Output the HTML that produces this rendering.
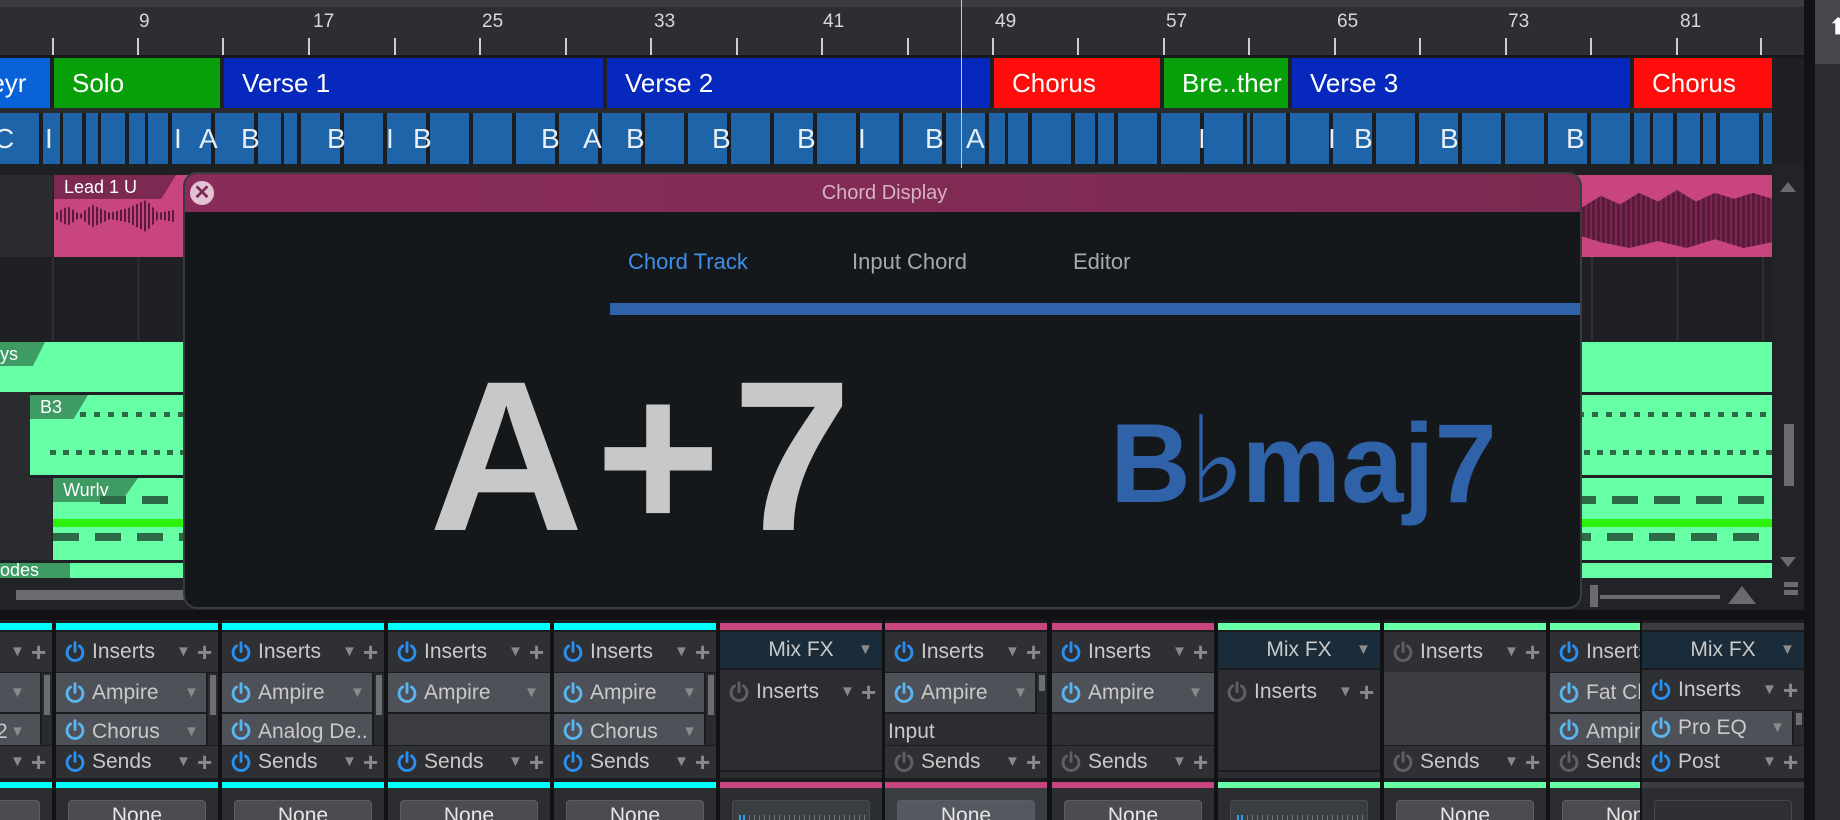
<!DOCTYPE html>
<html><head><meta charset="utf-8"><style>
*{margin:0;padding:0;box-sizing:border-box}
body{width:1840px;height:820px;background:#1a1b1e;position:relative;overflow:hidden;font-family:"Liberation Sans",sans-serif}
.a{position:absolute}
.blk{position:absolute;top:58px;height:50px;color:#fff;font-size:26px;line-height:50px;padding-left:18px;white-space:nowrap;overflow:hidden}
.num{position:absolute;top:11px;font-size:19px;color:#d8d8d8}
.tick{position:absolute;top:38px;width:2px;height:17px;background:#cfcfcf}
.cl{position:absolute;top:113px;font-size:28px;color:#e8eef5;line-height:51px}
.strip{position:absolute;top:620px;width:162px;height:200px;background:#1b1c1f;overflow:hidden}
.strip .r{position:absolute;left:0;width:162px;color:#c9c9c9;font-size:21px;white-space:nowrap;overflow:hidden}
.hd{top:12px;height:40px;background:#2e3034;line-height:40px}
.s1{top:53px;height:39px;background:#4e5158;line-height:39px;width:150px!important}
.s2{top:94px;height:31px;background:#4e5158;line-height:36px;width:150px!important}
.se{top:126px;height:32px;background:#2e3034;line-height:32px}
.r .p{position:absolute;left:9px;top:50%;margin-top:-11px}
.r .t{position:absolute;left:36px}
.r .v{position:absolute;left:120px;color:#8a8a8a;font-size:15px}
.r .pl{position:absolute;left:141px;color:#8a8a8a;font-size:26px;font-weight:bold}
.bar{position:absolute;left:0;width:162px;height:7px;top:3px}
.bar2{position:absolute;left:0;width:162px;height:6px;top:162px}
.bot{position:absolute;left:0;width:162px;top:168px;height:32px;background:#2b2d31}
.btn{position:absolute;left:12px;top:12px;width:138px;height:30px;background:#4a4c50;border:1px solid #5c5e62;border-radius:4px;color:#e6e6e6;font-size:21px;text-align:center;line-height:30px}
.sb{position:absolute;left:152px;top:53px;width:10px;height:72px;background:#2a2b2e}
.sb i{position:absolute;left:2px;top:2px;width:6px;height:40px;background:#6c6e72}
.mfx{top:12px;height:36px;background:#1a2c3a;text-align:center;line-height:36px;color:#ccc}
.meter{position:absolute;left:12px;top:12px;width:138px;height:30px;background:#3a3d42;border-radius:3px;border:1px solid #4a4c50}
.meter i{position:absolute;left:6px;top:14px;width:126px;height:12px;background:repeating-linear-gradient(90deg,#70757c 0 1px,transparent 1px 5px)}
.meter b{position:absolute;left:6px;top:14px;width:8px;height:12px;background:repeating-linear-gradient(90deg,#2a9ff0 0 2px,transparent 2px 4px)}
.tab{position:absolute;height:24px;line-height:24px;font-size:18px;color:#fff;padding-left:10px}
</style></head><body>
<svg width="0" height="0" style="position:absolute"><defs>
<symbol id="pw" viewBox="0 0 18 20"><path d="M5 4.5 A7.2 7.2 0 1 0 13 4.5" fill="none" stroke="currentColor" stroke-width="2.6" stroke-linecap="round"/><line x1="9" y1="1.5" x2="9" y2="9.5" stroke="currentColor" stroke-width="2.6" stroke-linecap="round"/></symbol>
</defs></svg>

<div class="a" style="left:0;top:0;width:1804px;height:55px;background:#2c2e32"></div>
<div class="a" style="left:0;top:0;width:1804px;height:7px;background:#3a3c40"></div>
<div class="a" style="left:0;top:55px;width:1804px;height:3px;background:#18191b"></div>
<div class="tick" style="left:52px"></div><div class="tick" style="left:137px"></div><div class="tick" style="left:222px"></div><div class="tick" style="left:308px"></div><div class="tick" style="left:394px"></div><div class="tick" style="left:479px"></div><div class="tick" style="left:565px"></div><div class="tick" style="left:650px"></div><div class="tick" style="left:736px"></div><div class="tick" style="left:821px"></div><div class="tick" style="left:907px"></div><div class="tick" style="left:992px"></div><div class="tick" style="left:1077px"></div><div class="tick" style="left:1163px"></div><div class="tick" style="left:1248px"></div><div class="tick" style="left:1334px"></div><div class="tick" style="left:1419px"></div><div class="tick" style="left:1505px"></div><div class="tick" style="left:1590px"></div><div class="tick" style="left:1676px"></div><div class="tick" style="left:1760px"></div>
<div class="num" style="left:139px">9</div><div class="num" style="left:313px">17</div><div class="num" style="left:482px">25</div><div class="num" style="left:654px">33</div><div class="num" style="left:823px">41</div><div class="num" style="left:995px">49</div><div class="num" style="left:1166px">57</div><div class="num" style="left:1337px">65</div><div class="num" style="left:1508px">73</div><div class="num" style="left:1680px">81</div>
<div class="a" style="left:961px;top:0;width:1px;height:168px;background:#c8c8c8;z-index:5"></div>

<div class="a" style="left:1804px;top:0;width:11px;height:820px;background:#111214"></div>
<div class="a" style="left:1815px;top:0;width:25px;height:820px;background:#2b2d31"></div>
<div class="a" style="left:1815px;top:0;width:25px;height:64px;background:#45474b"></div>
<div class="a" style="left:1829px;top:14px;color:#fff;font-size:22px;font-weight:bold">⬆</div>

<div class="a" style="left:0;top:58px;width:1804px;height:117px;background:#1f2023"></div>
<div class="blk" style="left:-45px;width:95px;background:#0a62d8">Keyr</div>
<div class="blk" style="left:54px;width:166px;background:#08a00a;padding-left:18px">Solo</div>
<div class="blk" style="left:224px;width:379px;background:#0628bc">Verse 1</div>
<div class="blk" style="left:607px;width:383px;background:#0628bc">Verse 2</div>
<div class="blk" style="left:994px;width:166px;background:#ff0d0d">Chorus</div>
<div class="blk" style="left:1164px;width:124px;background:#08a00a;padding-left:18px">Bre..ther</div>
<div class="blk" style="left:1292px;width:338px;background:#0628bc">Verse 3</div>
<div class="blk" style="left:1634px;width:138px;background:#ff0d0d">Chorus</div>
<div class="a" style="left:0;top:108px;width:1772px;height:5px;background:#2a2b2f"></div>
<div class="a" style="left:0;top:113px;width:1772px;height:51px;background:repeating-linear-gradient(90deg,#1e64a8 0 39px,#1a1c20 39px 43px)"></div>
<div class="a" style="left:60px;top:113px;width:3px;height:51px;background:#1a1c20"></div><div class="a" style="left:98px;top:113px;width:3px;height:51px;background:#1a1c20"></div><div class="a" style="left:145px;top:113px;width:3px;height:51px;background:#1a1c20"></div><div class="a" style="left:281px;top:113px;width:3px;height:51px;background:#1a1c20"></div><div class="a" style="left:1005px;top:113px;width:3px;height:51px;background:#1a1c20"></div><div class="a" style="left:1095px;top:113px;width:3px;height:51px;background:#1a1c20"></div><div class="a" style="left:1250px;top:113px;width:3px;height:51px;background:#1a1c20"></div><div class="a" style="left:1650px;top:113px;width:3px;height:51px;background:#1a1c20"></div><div class="a" style="left:1700px;top:113px;width:3px;height:51px;background:#1a1c20"></div>
<div class="cl" style="left:-6px">C</div><div class="cl" style="left:45px">I</div><div class="cl" style="left:174px">I</div><div class="cl" style="left:199px">A</div><div class="cl" style="left:241px">B</div><div class="cl" style="left:327px">B</div><div class="cl" style="left:386px">I</div><div class="cl" style="left:413px">B</div><div class="cl" style="left:541px">B</div><div class="cl" style="left:583px">A</div><div class="cl" style="left:626px">B</div><div class="cl" style="left:712px">B</div><div class="cl" style="left:797px">B</div><div class="cl" style="left:858px">I</div><div class="cl" style="left:925px">B</div><div class="cl" style="left:966px">A</div><div class="cl" style="left:1198px">I</div><div class="cl" style="left:1328px">I</div><div class="cl" style="left:1354px">B</div><div class="cl" style="left:1440px">B</div><div class="cl" style="left:1566px">B</div>
<div class="a" style="left:0;top:164px;width:1772px;height:11px;background:#1f2023"></div>

<div class="a" style="left:0;top:175px;width:1772px;height:402px;background:#1f2023"></div>
<div class="a" style="left:0;top:175px;width:53px;height:82px;background:#2a2b2f"></div>
<div class="a" style="left:0;top:257px;width:1772px;height:84px;background:repeating-linear-gradient(90deg,#2e2f33 0 2px,transparent 2px 85.5px);background-position:52px 0"></div>
<div class="a" style="left:54px;top:175px;width:1718px;height:82px;background:#c9457f"></div>
<div class="tab" style="left:54px;top:175px;width:122px;background:#7d2a52;clip-path:polygon(0 0,100% 0,88% 100%,0 100%)">Lead 1 U</div>
<div class="a" style="left:56px;top:200px;width:120px;height:32px;background:repeating-linear-gradient(90deg,#5a1a3a 0 2px,transparent 2px 4px);clip-path:polygon(0 40%,10% 20%,20% 45%,30% 15%,45% 40%,60% 25%,75% 0,85% 40%,100% 30%,100% 70%,85% 60%,75% 100%,60% 70%,45% 60%,30% 85%,20% 55%,10% 80%,0 60%)"></div>
<div class="a" style="left:1582px;top:190px;width:190px;height:58px;background:repeating-linear-gradient(90deg,#5a1a3a 0 3px,#7a2650 3px 5px);clip-path:polygon(0 30%,10% 10%,20% 25%,30% 5%,40% 20%,50% 0,60% 20%,70% 5%,80% 15%,90% 5%,100% 15%,100% 90%,85% 100%,70% 85%,55% 100%,40% 88%,25% 100%,10% 90%,0 80%)"></div>
<div class="a" style="left:0;top:342px;width:1772px;height:50px;background:#66ffa6"></div>
<div class="tab" style="left:-10px;top:342px;width:55px;background:#3d9b63;clip-path:polygon(0 0,100% 0,78% 100%,0 100%)">ys</div>
<div class="a" style="left:0;top:392px;width:30px;height:86px;background:#2a2b2f"></div>
<div class="a" style="left:30px;top:395px;width:1742px;height:80px;background:#66ffa6"></div>
<div class="tab" style="left:30px;top:395px;width:58px;background:#3d9b63;clip-path:polygon(0 0,100% 0,75% 100%,0 100%)">B3</div>
<div class="a" style="left:80px;top:412px;width:1692px;height:5px;background:repeating-linear-gradient(90deg,#2d6b47 0 6px,transparent 6px 14px)"></div>
<div class="a" style="left:50px;top:450px;width:1722px;height:5px;background:repeating-linear-gradient(90deg,#2d6b47 0 6px,transparent 6px 13px)"></div>
<div class="a" style="left:0;top:478px;width:52px;height:82px;background:#2a2b2f"></div>
<div class="a" style="left:53px;top:478px;width:1719px;height:82px;background:#66ffa6"></div>
<div class="tab" style="left:53px;top:478px;width:85px;background:#3d9b63;clip-path:polygon(0 0,100% 0,80% 100%,0 100%)">Wurly</div>
<div class="a" style="left:53px;top:519px;width:1719px;height:8px;background:#2cf20a"></div>
<div class="a" style="left:100px;top:496px;width:1672px;height:8px;background:repeating-linear-gradient(90deg,#2d6b47 0 26px,transparent 26px 42px)"></div>
<div class="a" style="left:53px;top:533px;width:1719px;height:8px;background:repeating-linear-gradient(90deg,#2d6b47 0 26px,transparent 26px 42px)"></div>
<div class="a" style="left:0;top:563px;width:1772px;height:15px;background:#66ffa6"></div>
<div class="tab" style="left:-10px;top:563px;width:80px;height:15px;line-height:15px;background:#3d9b63;overflow:hidden">odes</div>
<div class="a" style="left:0;top:578px;width:1804px;height:32px;background:#222326"></div>
<div class="a" style="left:16px;top:590px;width:170px;height:10px;background:#6a6b6e"></div>
<div class="a" style="left:1772px;top:164px;width:32px;height:446px;background:#222326"></div>
<div class="a" style="left:1780px;top:182px;width:0;height:0;border-left:8px solid transparent;border-right:8px solid transparent;border-bottom:10px solid #6a6b6e"></div>
<div class="a" style="left:1784px;top:424px;width:10px;height:62px;background:#6a6b6e"></div>
<div class="a" style="left:1780px;top:557px;width:0;height:0;border-left:8px solid transparent;border-right:8px solid transparent;border-top:10px solid #6a6b6e"></div>
<div class="a" style="left:1784px;top:582px;width:14px;height:5px;background:#6a6b6e"></div><div class="a" style="left:1784px;top:590px;width:14px;height:5px;background:#6a6b6e"></div>
<div class="a" style="left:1600px;top:595px;width:120px;height:4px;background:#6a6b6e"></div>
<div class="a" style="left:1590px;top:585px;width:8px;height:22px;background:#6a6b6e"></div>
<div class="a" style="left:1728px;top:586px;width:0;height:0;border-left:14px solid transparent;border-right:14px solid transparent;border-bottom:18px solid #6a6b6e"></div>

<div class="a" style="left:183px;top:172px;width:1399px;height:437px;background:#14181b;border:2px solid #3a3c40;border-radius:14px;overflow:hidden;z-index:10">
 <div class="a" style="left:0;top:0;width:1399px;height:38px;background:linear-gradient(90deg,#8a2c5a,#7a2a50);color:#d5b3c4;font-size:20px;text-align:center;line-height:38px">Chord Display</div>
 <div class="a" style="left:5px;top:7px;width:24px;height:24px;border-radius:50%;background:#e3c3d3;color:#7a2a50;font-size:20px;font-weight:bold;text-align:center;line-height:24px">✕</div>
 <div class="a" style="left:443px;top:75px;color:#3f8fe8;font-size:22px">Chord Track</div>
 <div class="a" style="left:667px;top:75px;color:#a8a8a8;font-size:22px">Input Chord</div>
 <div class="a" style="left:888px;top:75px;color:#a8a8a8;font-size:22px">Editor</div>
 <div class="a" style="left:425px;top:129px;width:980px;height:12px;background:#2f62a8"></div>
 <div class="a" style="left:244px;top:176px;color:#c8c8c8;font-size:214px;font-weight:bold;letter-spacing:12px;line-height:1;white-space:nowrap">A+7</div>
 <div class="a" style="left:925px;top:228px;color:#2f62a8;font-size:112px;font-weight:bold;line-height:1;white-space:nowrap">B<span style="font-family:'DejaVu Sans',sans-serif;font-weight:normal;font-size:120px;margin:0 -4px 0 -2px">♭</span>maj7</div>
</div>

<div class="a" style="left:0;top:610px;width:1804px;height:210px;background:#111214"></div>

<div class="strip" style="left:-110px">
 <div class="bar" style="background:#00ffff"></div>
 <div class="r hd"><span class="v">▼</span><span class="pl">+</span></div>
 <div class="r s1"><span class="v">▼</span></div>
 <div class="r s2"><span class="t" style="left:106px">2</span><span class="v">▼</span></div>
 <div class="sb"><i></i></div>
 <div class="r se"><span class="v">▼</span><span class="pl">+</span></div>
 <div class="bar2" style="background:#00ffff"></div>
 <div class="bot"><div class="btn">None</div></div>
</div>

<div class="strip" style="left:56px">
 <div class="bar" style="background:#00ffff"></div>
 <div class="r hd"><svg class="p" width="20" height="22" style="color:#2b8ff0"><use href="#pw"/></svg><span class="t">Inserts</span><span class="v">▼</span><span class="pl">+</span></div>
 <div class="r s1"><svg class="p" width="20" height="22" style="color:#5ab4f0"><use href="#pw"/></svg><span class="t">Ampire</span><span class="v" style="left:128px">▼</span></div>
 <div class="r s2"><svg class="p" width="20" height="22" style="color:#5ab4f0"><use href="#pw"/></svg><span class="t">Chorus</span><span class="v" style="left:128px">▼</span></div>
 <div class="sb"><i></i></div>
 <div class="r se"><svg class="p" width="20" height="22" style="color:#2b8ff0"><use href="#pw"/></svg><span class="t">Sends</span><span class="v">▼</span><span class="pl">+</span></div>
 <div class="bar2" style="background:#00ffff"></div>
 <div class="bot"><div class="btn">None</div></div>
</div>

<div class="strip" style="left:222px">
 <div class="bar" style="background:#00ffff"></div>
 <div class="r hd"><svg class="p" width="20" height="22" style="color:#2b8ff0"><use href="#pw"/></svg><span class="t">Inserts</span><span class="v">▼</span><span class="pl">+</span></div>
 <div class="r s1"><svg class="p" width="20" height="22" style="color:#5ab4f0"><use href="#pw"/></svg><span class="t">Ampire</span><span class="v" style="left:128px">▼</span></div>
 <div class="r s2"><svg class="p" width="20" height="22" style="color:#5ab4f0"><use href="#pw"/></svg><span class="t">Analog De..</span></div>
 <div class="sb"><i></i></div>
 <div class="r se"><svg class="p" width="20" height="22" style="color:#2b8ff0"><use href="#pw"/></svg><span class="t">Sends</span><span class="v">▼</span><span class="pl">+</span></div>
 <div class="bar2" style="background:#00ffff"></div>
 <div class="bot"><div class="btn">None</div></div>
</div>

<div class="strip" style="left:388px">
 <div class="bar" style="background:#00ffff"></div>
 <div class="r hd"><svg class="p" width="20" height="22" style="color:#2b8ff0"><use href="#pw"/></svg><span class="t">Inserts</span><span class="v">▼</span><span class="pl">+</span></div>
 <div class="r s1" style="width:162px!important"><svg class="p" width="20" height="22" style="color:#5ab4f0"><use href="#pw"/></svg><span class="t">Ampire</span><span class="v" style="left:136px">▼</span></div>
 <div class="r s2" style="background:#3a3c41;width:162px!important"></div>
 <div class="r se"><svg class="p" width="20" height="22" style="color:#2b8ff0"><use href="#pw"/></svg><span class="t">Sends</span><span class="v">▼</span><span class="pl">+</span></div>
 <div class="bar2" style="background:#00ffff"></div>
 <div class="bot"><div class="btn">None</div></div>
</div>

<div class="strip" style="left:554px">
 <div class="bar" style="background:#00ffff"></div>
 <div class="r hd"><svg class="p" width="20" height="22" style="color:#2b8ff0"><use href="#pw"/></svg><span class="t">Inserts</span><span class="v">▼</span><span class="pl">+</span></div>
 <div class="r s1"><svg class="p" width="20" height="22" style="color:#5ab4f0"><use href="#pw"/></svg><span class="t">Ampire</span><span class="v" style="left:128px">▼</span></div>
 <div class="r s2"><svg class="p" width="20" height="22" style="color:#5ab4f0"><use href="#pw"/></svg><span class="t">Chorus</span><span class="v" style="left:128px">▼</span></div>
 <div class="sb"><i></i></div>
 <div class="r se"><svg class="p" width="20" height="22" style="color:#2b8ff0"><use href="#pw"/></svg><span class="t">Sends</span><span class="v">▼</span><span class="pl">+</span></div>
 <div class="bar2" style="background:#00ffff"></div>
 <div class="bot"><div class="btn">None</div></div>
</div>

<div class="strip" style="left:720px">
 <div class="bar" style="background:#c9457f"></div>
 <div class="r mfx">Mix FX<span class="v" style="left:138px">▼</span></div>
 <div class="a" style="left:0;top:50px;width:162px;height:100px;background:#2b2d31"></div>
 <div class="r" style="top:52px;height:40px;line-height:40px"><svg class="p" width="20" height="22" style="color:#5e6064"><use href="#pw"/></svg><span class="t">Inserts</span><span class="v">▼</span><span class="pl">+</span></div>
 <div class="a" style="left:0;top:152px;width:162px;height:6px;background:#2b2d31"></div>
 <div class="bar2" style="background:#c9457f"></div>
 <div class="bot"><div class="meter"><i></i><b></b></div></div>
</div>

<div class="strip" style="left:885px">
 <div class="bar" style="background:#c9457f"></div>
 <div class="r hd"><svg class="p" width="20" height="22" style="color:#2b8ff0"><use href="#pw"/></svg><span class="t">Inserts</span><span class="v">▼</span><span class="pl">+</span></div>
 <div class="r s1"><svg class="p" width="20" height="22" style="color:#5ab4f0"><use href="#pw"/></svg><span class="t">Ampire</span><span class="v" style="left:128px">▼</span></div>
 <div class="r s2" style="background:#2b2d31;width:162px!important"><span class="t" style="left:3px;top:0">Input</span></div>
 <div class="sb" style="height:40px"><i style="height:16px"></i></div>
 <div class="r se"><svg class="p" width="20" height="22" style="color:#5e6064"><use href="#pw"/></svg><span class="t">Sends</span><span class="v">▼</span><span class="pl">+</span></div>
 <div class="bar2" style="background:#c9457f"></div>
 <div class="bot" style="background:#3a3d42"><div class="btn" style="background:#555860">None</div></div>
</div>

<div class="strip" style="left:1052px">
 <div class="bar" style="background:#c9457f"></div>
 <div class="r hd"><svg class="p" width="20" height="22" style="color:#2b8ff0"><use href="#pw"/></svg><span class="t">Inserts</span><span class="v">▼</span><span class="pl">+</span></div>
 <div class="r s1" style="width:162px!important"><svg class="p" width="20" height="22" style="color:#5ab4f0"><use href="#pw"/></svg><span class="t">Ampire</span><span class="v" style="left:136px">▼</span></div>
 <div class="r s2" style="background:#2e3034;width:162px!important"></div>
 <div class="r se"><svg class="p" width="20" height="22" style="color:#5e6064"><use href="#pw"/></svg><span class="t">Sends</span><span class="v">▼</span><span class="pl">+</span></div>
 <div class="bar2" style="background:#c9457f"></div>
 <div class="bot"><div class="btn">None</div></div>
</div>

<div class="strip" style="left:1218px">
 <div class="bar" style="background:#66ffa6"></div>
 <div class="r mfx">Mix FX<span class="v" style="left:138px">▼</span></div>
 <div class="a" style="left:0;top:50px;width:162px;height:100px;background:#2b2d31"></div>
 <div class="r" style="top:52px;height:40px;line-height:40px"><svg class="p" width="20" height="22" style="color:#5e6064"><use href="#pw"/></svg><span class="t">Inserts</span><span class="v">▼</span><span class="pl">+</span></div>
 <div class="a" style="left:0;top:152px;width:162px;height:6px;background:#2b2d31"></div>
 <div class="bar2" style="background:#66ffa6"></div>
 <div class="bot"><div class="meter"><i></i><b></b></div></div>
</div>

<div class="strip" style="left:1384px">
 <div class="bar" style="background:#66ffa6"></div>
 <div class="r hd"><svg class="p" width="20" height="22" style="color:#5e6064"><use href="#pw"/></svg><span class="t">Inserts</span><span class="v">▼</span><span class="pl">+</span></div>
 <div class="r" style="top:52px;height:73px;background:#3a3c41"></div>
 <div class="r se"><svg class="p" width="20" height="22" style="color:#5e6064"><use href="#pw"/></svg><span class="t">Sends</span><span class="v">▼</span><span class="pl">+</span></div>
 <div class="bar2" style="background:#66ffa6"></div>
 <div class="bot"><div class="btn">None</div></div>
</div>

<div class="strip" style="left:1550px;width:90px">
 <div class="bar" style="background:#66ffa6"></div>
 <div class="r hd"><svg class="p" width="20" height="22" style="color:#2b8ff0"><use href="#pw"/></svg><span class="t">Inserts</span></div>
 <div class="r s1"><svg class="p" width="20" height="22" style="color:#5ab4f0"><use href="#pw"/></svg><span class="t">Fat Channel</span></div>
 <div class="r s2"><svg class="p" width="20" height="22" style="color:#5ab4f0"><use href="#pw"/></svg><span class="t">Ampire</span></div>
 <div class="r se"><svg class="p" width="20" height="22" style="color:#5e6064"><use href="#pw"/></svg><span class="t">Sends</span></div>
 <div class="bar2" style="background:#66ffa6"></div>
 <div class="bot"><div class="btn">None</div></div>
</div>

<div class="strip" style="left:1642px">
 <div class="bar" style="background:#3a3c40"></div>
 <div class="r mfx">Mix FX<span class="v" style="left:138px">▼</span></div>
 <div class="r" style="top:50px;height:40px;line-height:40px;background:#2e3034"><svg class="p" width="20" height="22" style="color:#2b8ff0"><use href="#pw"/></svg><span class="t">Inserts</span><span class="v">▼</span><span class="pl">+</span></div>
 <div class="r" style="top:91px;height:34px;line-height:34px;background:#4e5158;width:150px"><svg class="p" width="20" height="22" style="color:#5ab4f0"><use href="#pw"/></svg><span class="t">Pro EQ</span><span class="v" style="left:128px">▼</span></div>
 <div class="a" style="left:152px;top:91px;width:10px;height:34px;background:#2a2b2e"><i style="position:absolute;left:2px;top:2px;width:6px;height:12px;background:#6c6e72"></i></div>
 <div class="r se"><svg class="p" width="20" height="22" style="color:#2b8ff0"><use href="#pw"/></svg><span class="t">Post</span><span class="v">▼</span><span class="pl">+</span></div>
 <div class="bar2" style="background:#3a3c40"></div>
 <div class="bot"><div class="btn" style="background:#2e3034;border-color:#45474b"></div></div>
</div>
</body></html>
